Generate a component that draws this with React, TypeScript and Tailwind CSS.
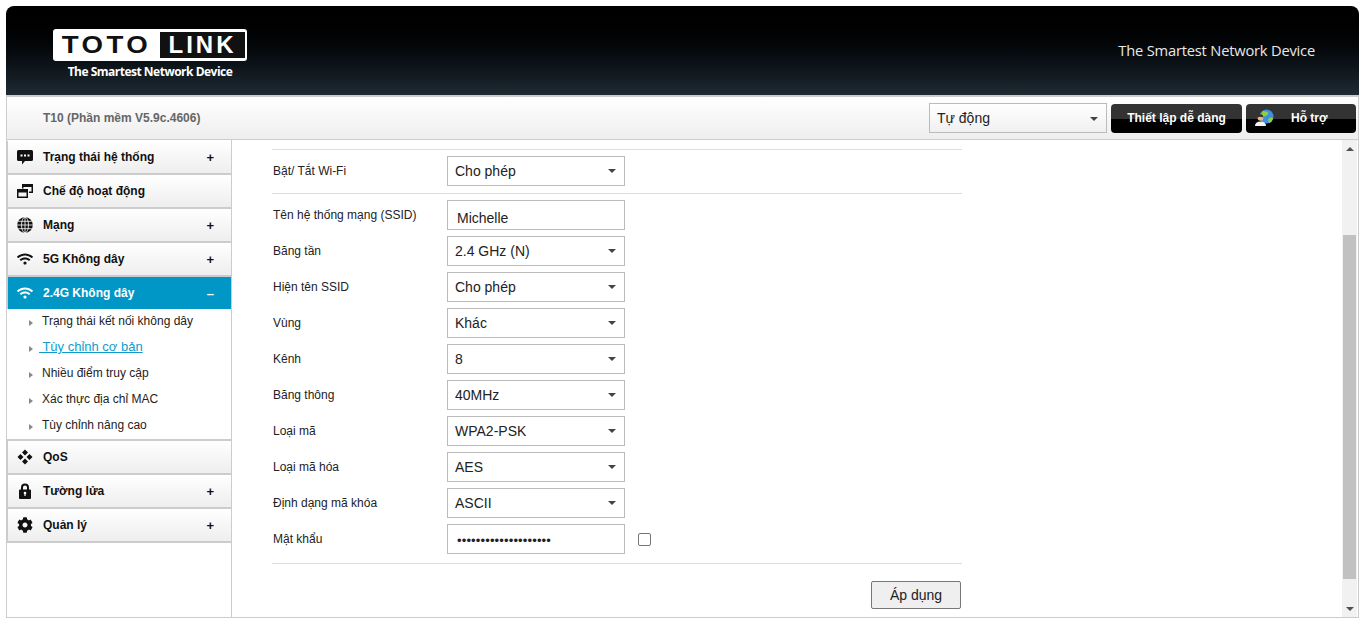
import React from "react";
import { FaWifi, FaCog } from "react-icons/fa";

function Bubble() {
  return (
    <svg width="16" height="16" viewBox="0 0 16 16" aria-hidden="true">
      <path d="M1.5 1h13A1.5 1.5 0 0 1 16 2.500v8a1.500 1.500 0 0 1-1.500 1.500H8l-3 3.500V12H1.500A1.500 1.500 0 0 1 0 10.500v-8A1.500 1.500 0 0 1 1.500 1z" fill="#111" />
      <rect x="3.500" y="5.500" width="2" height="2" fill="#fff" />
      <rect x="7" y="5.500" width="2" height="2" fill="#fff" />
      <rect x="10.500" y="5.500" width="2" height="2" fill="#fff" />
    </svg>
  );
}
function Windows() {
  return (
    <svg width="16" height="16" viewBox="0 0 16 16" aria-hidden="true">
      <path d="M5 1h11v9h-4v-1.500H14.500V4H6.500v1.500H5z" fill="#111" />
      <path d="M0 6h11v9H0zM1.500 9.500v4h8v-4z" fill="#111" fillRule="evenodd" />
    </svg>
  );
}
function Globe() {
  return (
    <svg width="16" height="16" viewBox="0 0 16 16" aria-hidden="true">
      <circle cx="8" cy="8" r="7.800" fill="#111" />
      <g fill="none" stroke="#fff" strokeWidth="0.800">
        <ellipse cx="8" cy="8" rx="3.500" ry="7.800" />
        <path d="M8 0v16M0 8h16M1.200 4.300h13.600M1.200 11.700h13.600" />
      </g>
    </svg>
  );
}
function Lock() {
  return (
    <svg width="14" height="16" viewBox="0 0 14 16" aria-hidden="true">
      <path d="M4 7V4.500a3 3 0 0 1 6 0V7" fill="none" stroke="#111" strokeWidth="2" />
      <path d="M2 6.500h10a1 1 0 0 1 1 1V15a1 1 0 0 1-1 1H2a1 1 0 0 1-1-1V7.500a1 1 0 0 1 1-1z" fill="#111" />
      <circle cx="7" cy="10" r="1.300" fill="#fff" />
      <rect x="6.400" y="10" width="1.200" height="3" fill="#fff" />
    </svg>
  );
}
function Diamonds() {
  return (
    <svg width="16" height="16" viewBox="0 0 16 16" aria-hidden="true">
      <path d="M8 0.500l3 3-3 3-3-3zM3.500 5l3 3-3 3-3-3zM12.500 5l3 3-3 3-3-3zM8 9.500l3 3-3 3-3-3z" fill="#111" />
    </svg>
  );
}
function Support() {
  return (
    <svg width="20" height="18" viewBox="0 0 20 18" aria-hidden="true">
      <circle cx="11.500" cy="7.500" r="7" fill="#3f8fdc" />
      <path d="M8 2c2 .5 4 0 5 1.500s-1 3-2.500 3.500S8 9 7 7s-.5-3 1-5zM14 9c1.500-.5 3.500-1 4 .5-.5 2.500-2 4-3.500 4.500-1.500-1-1.500-3.500-.5-5z" fill="#8fce3c" />
      <circle cx="5.500" cy="9" r="2.800" fill="#e6b68d" />
      <path d="M2.700 8.500C2.700 6 4 5.500 5.500 5.500S8.300 6 8.300 8.500C7 7.500 4 7.500 2.700 8.500z" fill="#3b2a20" />
      <path d="M0 17c0-3 2-4.500 5.500-4.500S11 14 11 17z" fill="#f4f4f4" />
    </svg>
  );
}

type Item = { icon: React.ReactNode; label: string; sign?: string; active?: boolean };
const base = { fontFamily: '"Liberation Sans", Arial, sans-serif' };

function MenuItem({ icon, label, sign, active }: Item) {
  return (
    <div
      className={
        active
          ? "h-[32px] flex items-center pl-[9px] pr-[17px] bg-[#0097c7] text-white border-l border-[#cccccc]"
          : "h-[34px] flex items-center pl-[9px] pr-[17px] bg-gradient-to-b from-white to-[#eeeeee] text-[#111] border-b-2 border-l border-[#cccccc]"
      }
    >
      <span className="w-[16px] h-[16px] flex items-center justify-center shrink-0">{icon}</span>
      <span className="ml-[10px] text-[12px] font-bold flex-1">{label}</span>
      {sign && <span className="text-[13px] font-bold leading-none">{sign}</span>}
    </div>
  );
}

function SubItem({ label, active }: { label: string; active?: boolean }) {
  return (
    <div className="h-[26px] flex items-center pl-[22px] pb-[2px] text-[12px] text-[#222]">
      <span className="w-0 h-0 border-y-[3px] border-y-transparent border-l-[4px] border-l-[#888] mr-[9px] mt-[3px]" />
      {active ? (
        <a className="text-[#0e9ccd] text-[13px] underline -ml-[3px] whitespace-pre">{" Tùy chỉnh cơ bản"}</a>
      ) : (
        <span>{label}</span>
      )}
    </div>
  );
}

function Arrow() {
  return <span className="w-0 h-0 border-x-[4px] border-x-transparent border-t-[4px] border-t-[#444]" />;
}

function Dropdown({ value, wide }: { value: string; wide?: boolean }) {
  return (
    <div
      className={
        wide
          ? "w-[178px] h-[30px] border border-[#bbbbbb] bg-gradient-to-b from-white to-[#f0f0f0] flex items-center justify-between pl-[7px] pr-[8px] pt-[1px] text-[14px] text-[#222]"
          : "w-[178px] h-[30px] border border-[#bbbbbb] bg-white flex items-center justify-between pl-[7px] pr-[8px] text-[14px] text-[#222]"
      }
    >
      <span>{value}</span>
      <Arrow />
    </div>
  );
}

function Row({ label, children }: { label: string; children: React.ReactNode }) {
  return (
    <div className="flex items-center h-[30px] mb-[6px]">
      <div className="w-[175px] pl-[1px] text-[12px] text-[#222] -mt-[1px]">{label}</div>
      {children}
    </div>
  );
}

const rows = [
  ["Băng tần", "2.4 GHz (N)"],
  ["Hiện tên SSID", "Cho phép"],
  ["Vùng", "Khác"],
  ["Kênh", "8"],
  ["Băng thông", "40MHz"],
  ["Loại mã", "WPA2-PSK"],
  ["Loại mã hóa", "AES"],
  ["Định dạng mã khóa", "ASCII"],
];

export default function App() {
  return (
    <div className="h-[618px] overflow-hidden bg-white pt-[6px] pl-[6px] pr-[7px]" style={base}>
      <div className="h-[612px] flex flex-col">
        <header className="h-[89px] shrink-0 rounded-t-[8px] bg-gradient-to-b from-black to-[#1f2a33] flex items-start justify-between pl-[47px] pr-[44px]">
          <div className="flex flex-col items-center mt-[23px] w-[194px]">
            <div className="w-[194px] h-[32px] bg-white rounded-[3px] flex items-center pr-[2px]">
              <span className="w-[107px] text-center text-[24px] font-bold text-[#111] tracking-[3px] leading-none scale-x-[1.15]">TOTO</span>
              <span className="flex-1 h-[26px] bg-[#111] text-white text-[24px] font-bold tracking-[3px] leading-[26px] text-center">LINK</span>
            </div>
            <div className="mt-[2px] text-white text-[12px] font-bold whitespace-nowrap tracking-[-0.5px]" style={{ fontFamily: '"Open Sans", sans-serif' }}>
              The Smartest Network Device
            </div>
          </div>
          <div className="mt-[33px] text-[#e8e8e8] text-[14.700px] whitespace-nowrap tracking-[-0.2px]" style={{ fontFamily: '"Open Sans", sans-serif' }}>
            The Smartest Network Device
          </div>
        </header>

        <div className="h-[45px] shrink-0 border-t-2 border-b border-[#cccccc] border-l border-r bg-gradient-to-b from-white to-[#eeeeee] flex items-center pl-[36px] pr-[2px]">
          <span className="flex-1 text-[12px] font-bold text-[#666]">T10 (Phần mềm V5.9c.4606)</span>
          <Dropdown value="Tự động" wide />
          <button className="ml-[4px] w-[131px] h-[29px] rounded-[4px] bg-gradient-to-b from-[#333] from-50% to-black to-50% text-white text-[12px] font-bold">
            Thiết lập dễ dàng
          </button>
          <button className="ml-[4px] w-[110px] h-[29px] rounded-[4px] bg-gradient-to-b from-[#333] from-50% to-black to-50% text-white text-[12px] font-bold flex items-center pl-[9px]">
            <Support />
            <span className="ml-[16px]">Hỗ trợ</span>
          </button>
        </div>

        <div className="flex flex-1 min-h-0 border-l border-r border-b border-[#cccccc]">
          <aside className="w-[225px] shrink-0 border-r border-[#cccccc] pt-[1px]">
            <MenuItem icon={<Bubble />} label="Trạng thái hệ thống" sign="+" />
            <MenuItem icon={<Windows />} label="Chế độ hoạt động" />
            <MenuItem icon={<Globe />} label="Mạng" sign="+" />
            <MenuItem icon={<FaWifi size={16} />} label="5G Không dây" sign="+" />
            <MenuItem icon={<FaWifi size={16} />} label="2.4G Không dây" sign="–" active />
            <div className="border-b-2 border-[#cccccc]">
              <SubItem label="Trạng thái kết nối không dây" />
              <SubItem label="Tùy chỉnh cơ bản" active />
              <SubItem label="Nhiều điểm truy cập" />
              <SubItem label="Xác thực địa chỉ MAC" />
              <SubItem label="Tùy chỉnh nâng cao" />
            </div>
            <MenuItem icon={<Diamonds />} label="QoS" />
            <MenuItem icon={<Lock />} label="Tường lửa" sign="+" />
            <MenuItem icon={<FaCog size={16} />} label="Quản lý" sign="+" />
          </aside>

          <main className="flex-1 flex min-w-0">
            <div className="flex-1 pl-[40px] pt-[9px]">
              <div className="w-[690px]">
                <div className="border-t border-[#dddddd] pt-[6px] pb-[7px] border-b">
                  <div className="flex items-center h-[30px]">
                    <div className="w-[175px] pl-[1px] text-[12px] text-[#222] -mt-[1px]">Bật/ Tắt Wi-Fi</div>
                    <Dropdown value="Cho phép" />
                  </div>
                </div>
                <div className="pt-[6px]">
                  <Row label="Tên hệ thống mạng (SSID)">
                    <div className="w-[178px] h-[30px] border border-[#bbbbbb] bg-white pl-[9px] pt-[7px] text-[14px] text-[#222] leading-[20px]">Michelle</div>
                  </Row>
                  {rows.map(([l, v]) => (
                    <Row key={l} label={l}>
                      <Dropdown value={v} />
                    </Row>
                  ))}
                  <Row label="Mật khẩu">
                    <div className="w-[178px] h-[30px] border border-[#bbbbbb] bg-white pl-[9px] pt-[5px] text-[13px] tracking-[0.15px] text-[#222] leading-[22px]">
                      ••••••••••••••••••••
                    </div>
                    <span className="ml-[13px] w-[13px] h-[13px] border border-[#767676] rounded-[2px] bg-white" />
                  </Row>
                </div>
                <div className="border-t border-[#dddddd] mt-[9px] pt-[17px] flex justify-end pr-[1px]">
                  <button className="w-[90px] h-[28px] border border-[#777] rounded-[2px] bg-[#efefef] text-[14px] text-[#222]">Áp dụng</button>
                </div>
              </div>
            </div>
            <div className="w-[15px] mr-[1px] shrink-0 bg-[#f1f1f1] flex flex-col items-center">
              <div className="h-[17px] flex items-center justify-center">
                <span className="w-0 h-0 border-x-[4px] border-x-transparent border-b-[4px] border-b-[#505050]" />
              </div>
              <div className="h-[78px]" />
              <div className="w-[13px] h-[344px] bg-[#c1c1c1]" />
              <div className="flex-1" />
              <div className="h-[17px] flex items-center justify-center">
                <span className="w-0 h-0 border-x-[4px] border-x-transparent border-t-[4px] border-t-[#505050]" />
              </div>
            </div>
          </main>
        </div>
      </div>
    </div>
  );
}
